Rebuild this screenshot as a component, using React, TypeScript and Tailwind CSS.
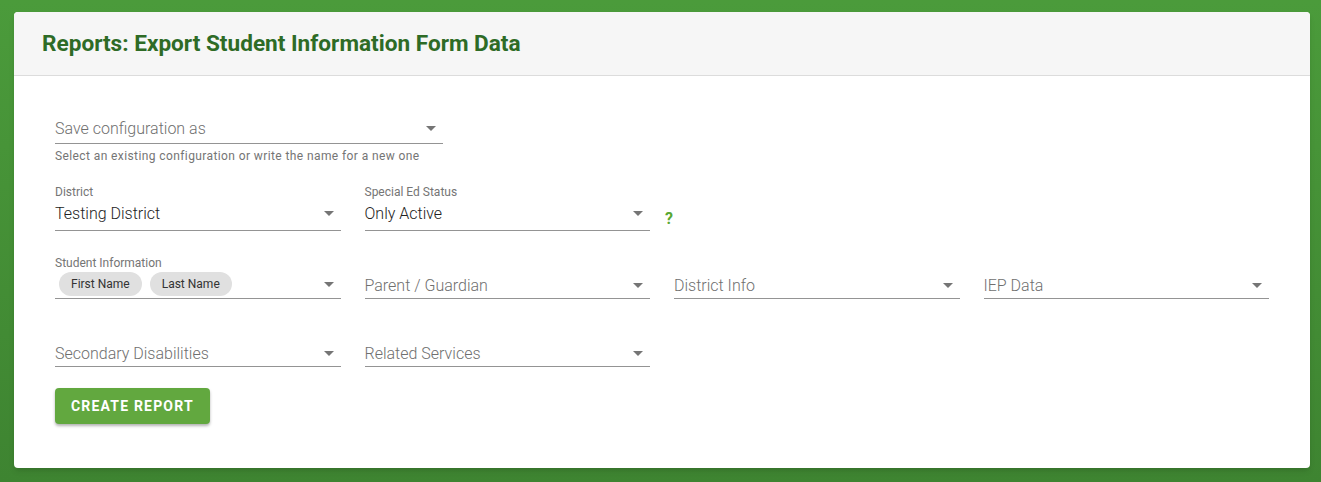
import React from "react";

type FieldProps = {
  label?: string;
  value?: string;
  placeholder?: string;
  chips?: string[];
  pb?: string;
  h?: string;
};

function Caret() {
  return (
    <svg viewBox="0 0 24 24" className="h-6 w-6 shrink-0 fill-[#757575]">
      <path d="M7 10l5 5 5-5z" />
    </svg>
  );
}

function Field({ label, value, placeholder, chips, pb = "pb-[3px]", h = "h-[29px]" }: FieldProps) {
  return (
    <div className="flex flex-col">
      {label && <div className="text-[12px] leading-[14px] text-[#757575]">{label}</div>}
      <div className={`flex items-end justify-between border-b border-[#949494] ${h} ${pb}`}>
        {chips ? (
          <div className="ml-1 flex gap-2">
            {chips.map((c) => (
              <span
                key={c}
                className="flex h-6 items-center rounded-full bg-[#e0e0e0] px-3 text-[12px] text-[#333]"
              >
                {c}
              </span>
            ))}
          </div>
        ) : value ? (
          <span className="text-[16px] font-light leading-[19px] text-[#222]">{value}</span>
        ) : (
          <span className="text-[16px] font-light leading-[19px] text-[#6f6f6f]">{placeholder}</span>
        )}
        <div className={chips ? "mb-[0px]" : "-mb-[2px]"}>
          <Caret />
        </div>
      </div>
    </div>
  );
}

export default function App() {
  return (
    <div
      className="h-screen min-h-[482px] overflow-hidden bg-gradient-to-b from-[#4b9b3b] to-[#3e8431] pt-3"
      style={{ fontFamily: "Roboto, 'Liberation Sans', sans-serif" }}
    >
      <div className="ml-[14px] w-[1296px] overflow-hidden rounded-[4px] bg-white shadow-md">
        <div className="flex h-16 items-center border-b border-[#dcdcdc] bg-[#f6f6f6] px-7">
          <h1 className="text-[22.6px] font-bold text-[#2e6b26]">
            Reports: Export Student Information Form Data
          </h1>
        </div>

        <div className="px-[41px] pb-[44px] pt-[36px]">
          <div className="w-[388px]">
            <Field placeholder="Save configuration as" h="h-[32px]" pb="pb-[5px]" />
          </div>
          <div className="mt-[6px] text-[12px] leading-[13px] tracking-[0.4px] text-[#757575]">
            Select an existing configuration or write the name for a new one
          </div>

          <div className="mt-[22px] grid grid-cols-4 gap-x-6">
            <Field label="District" value="Testing District" h="h-[32px]" pb="pb-[7px]" />
            <div className="relative">
              <Field label="Special Ed Status" value="Only Active" h="h-[32px]" pb="pb-[7px]" />
              <span className="absolute left-[calc(100%+15px)] top-[22px] text-[16px] font-bold text-[#5aa832]">
                ?
              </span>
            </div>
          </div>

          <div className="mt-[25px] grid grid-cols-4 items-end gap-x-6">
            <Field label="Student Information" chips={["First Name", "Last Name"]} pb="pb-[2px]" />
            <Field placeholder="Parent / Guardian" />
            <Field placeholder="District Info" />
            <Field placeholder="IEP Data" />
          </div>

          <div className="mt-[39px] grid grid-cols-4 items-end gap-x-6">
            <Field placeholder="Secondary Disabilities" />
            <Field placeholder="Related Services" />
          </div>

          <button className="mt-[21px] h-9 rounded-[4px] bg-[#62a83f] px-4 text-[14px] font-bold uppercase tracking-[0.085em] text-white shadow-[0_2px_3px_rgba(0,0,0,0.3)]">
            Create Report
          </button>
        </div>
      </div>
    </div>
  );
}
